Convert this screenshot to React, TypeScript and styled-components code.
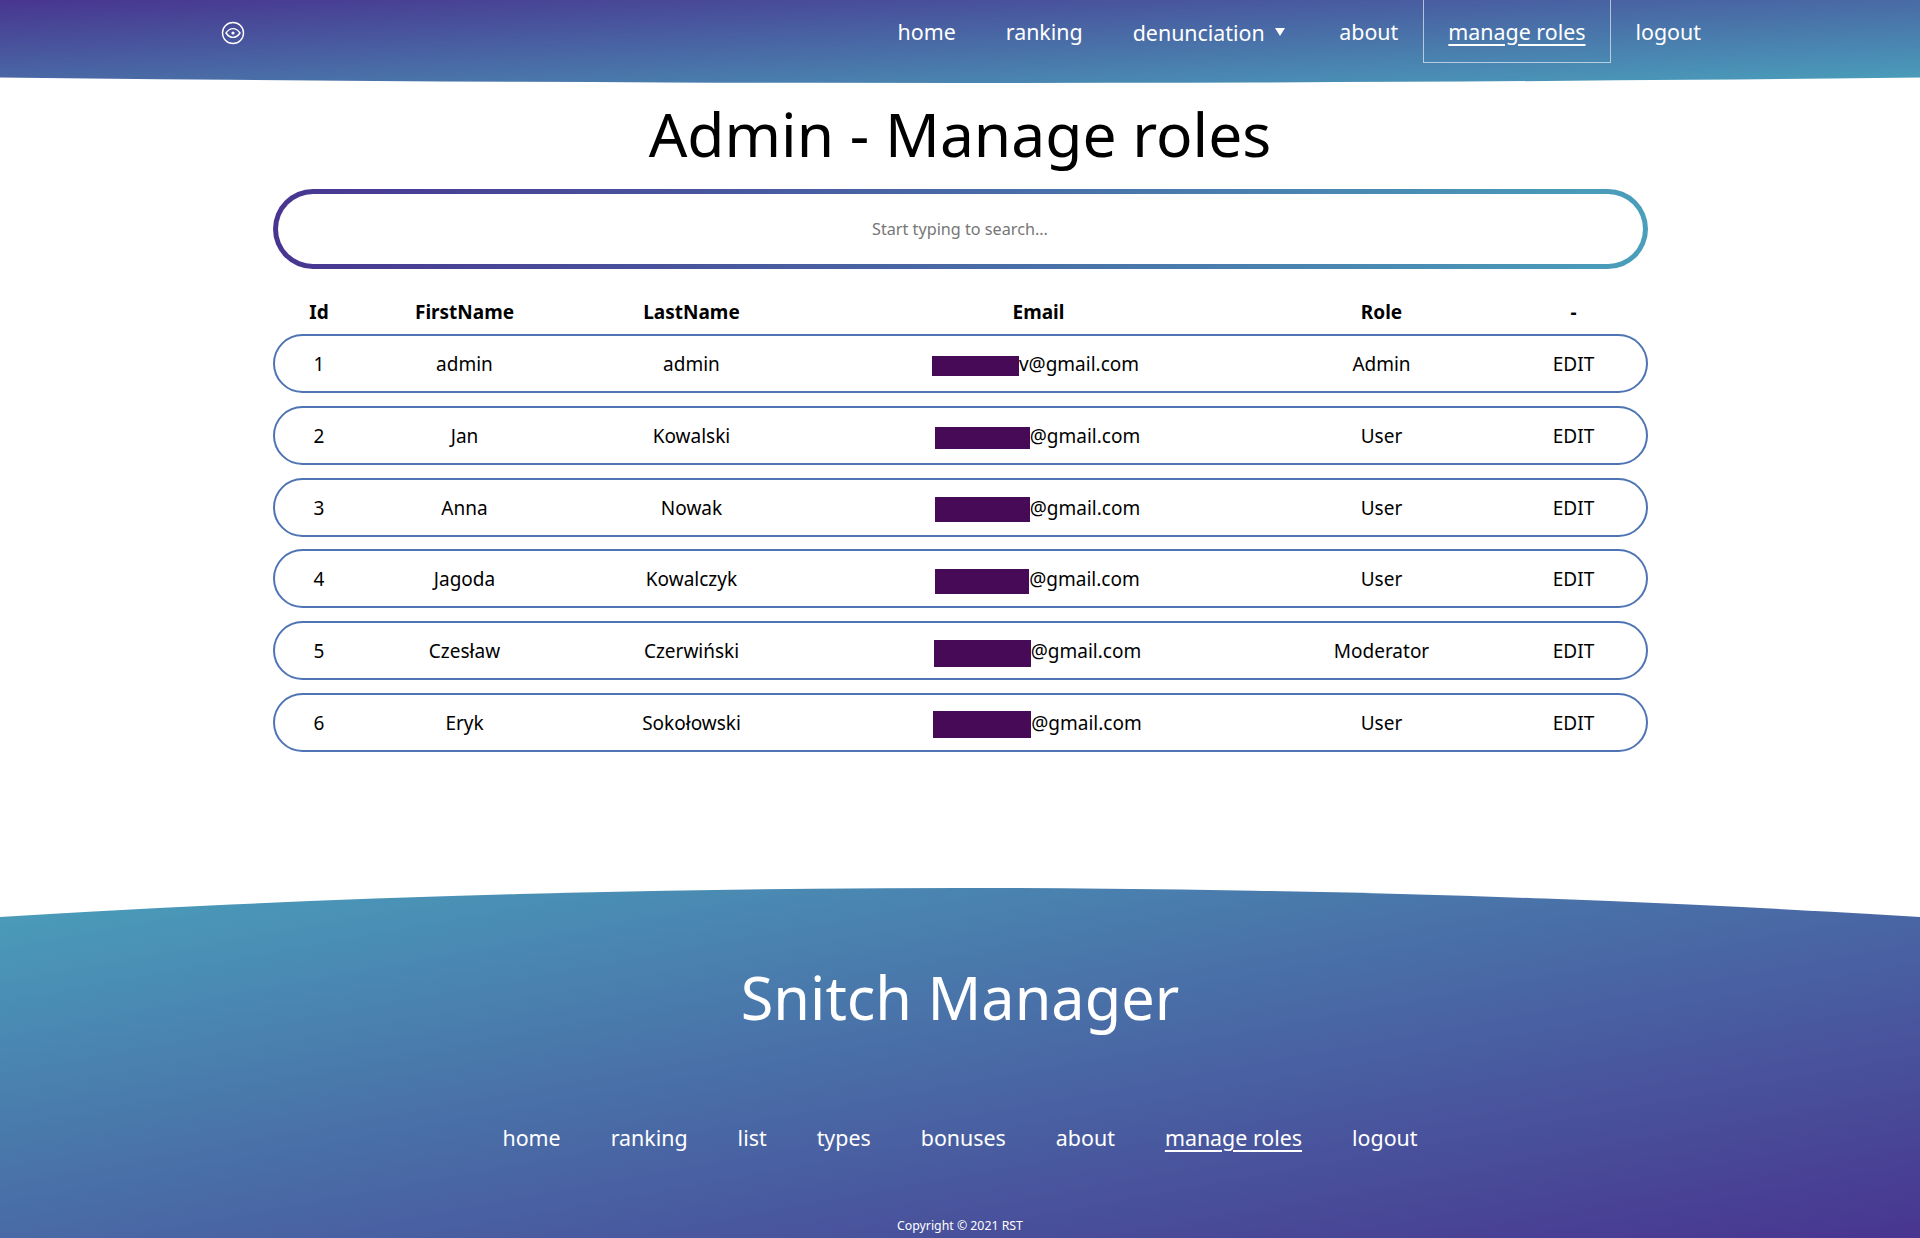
import styled, { createGlobalStyle } from "styled-components";

const GlobalStyle = createGlobalStyle`
  * {
    box-sizing: border-box;
  }

  html,
  body {
    margin: 0;
    padding: 0;
    background: #fff;
    font-family: "Noto Sans", "Lato", sans-serif;
    color: #000;
  }
`;

const COLUMNS = "89px 202px 252px 442px 244px 140px";

const Page = styled.div`
  display: flex;
  flex-direction: column;
  min-height: 1238px;
`;

const Header = styled.header`
  display: flex;
  align-items: flex-start;
  justify-content: space-between;
  height: 83px;
  padding: 0 194px 0 221px;
  background: linear-gradient(to bottom right, #483590, #4a9fbb);
  clip-path: ellipse(3000px 105px at 50% -22px);
`;

const Logo = styled.svg`
  width: 24px;
  height: 24px;
  margin-top: 21px;
  fill: none;
  stroke: #fff;
`;

const HeaderNav = styled.nav`
  display: flex;
  align-items: flex-start;
`;

const HeaderLink = styled.a<{ $active?: boolean; $lowered?: boolean }>`
  display: flex;
  align-items: center;
  height: 63px;
  padding: ${({ $lowered }) => ($lowered ? "2px" : "0")} 24px 0;
  font-size: 21.4px;
  color: #fff;
  text-decoration: ${({ $active }) => ($active ? "underline" : "none")};
  text-underline-offset: 4px;
  border: 1px solid ${({ $active }) => ($active ? "rgba(255, 255, 255, 0.6)" : "transparent")};
  border-top: none;
`;

const Caret = styled.span`
  width: 0;
  height: 0;
  margin: 0 4px 0 10.5px;
  border-left: 5px solid transparent;
  border-right: 5px solid transparent;
  border-top: 8px solid #fff;
`;

const Main = styled.main`
  flex: 1;
  width: 1375px;
  margin: 0 auto;
`;

const Title = styled.h1`
  margin: 0;
  padding-top: 15px;
  height: 106px;
  font-size: 60.5px;
  font-weight: 400;
  line-height: 72px;
  text-align: center;
`;

const SearchBox = styled.input`
  display: block;
  width: 100%;
  height: 80px;
  border: 5px solid transparent;
  border-radius: 40px;
  outline: none;
  background:
    linear-gradient(#fff, #fff) padding-box,
    linear-gradient(to right, #483590, #4a9fbb) border-box;
  font-family: inherit;
  font-size: 16.2px;
  text-align: center;

  &::placeholder {
    color: #767676;
  }
`;

const TableHead = styled.div`
  display: grid;
  grid-template-columns: ${COLUMNS};
  align-items: center;
  height: 65px;
  padding: 20px 2px 0;
  font-size: 19px;
  font-weight: 700;
  text-align: center;
`;

const Rows = styled.div`
  display: flex;
  flex-direction: column;
  gap: 12.8px;
`;

const Row = styled.div`
  display: grid;
  grid-template-columns: ${COLUMNS};
  align-items: center;
  height: 59px;
  padding-top: 1px;
  border: 2px solid #4f74b4;
  border-radius: 30px;
  font-size: 19px;
  text-align: center;
`;

const Cell = styled.span`
  display: block;
`;

const EmailCell = styled.span<{ $shift: number }>`
  display: block;
  padding-right: ${({ $shift }) => $shift * 2}px;
`;

const Redacted = styled.span<{ $width: number; $height: number }>`
  display: inline-block;
  vertical-align: middle;
  margin: -10px 0;
  width: ${({ $width }) => $width}px;
  height: ${({ $height }) => $height}px;
  background: #470a57;
`;

const Footer = styled.footer`
  display: flex;
  flex-direction: column;
  align-items: center;
  height: 350px;
  background: linear-gradient(to bottom right, #4a9fbb, #483590);
  clip-path: ellipse(3000px 551px at 50% 551px);
  color: #fff;
`;

const FooterTitle = styled.div`
  margin-top: 73px;
  font-size: 59.4px;
  line-height: 72px;
`;

const FooterNav = styled.nav`
  display: flex;
  gap: 50px;
  margin-top: 88px;
`;

const FooterLink = styled.a<{ $active?: boolean }>`
  font-size: 21.4px;
  line-height: 34px;
  color: #fff;
  text-decoration: ${({ $active }) => ($active ? "underline" : "none")};
  text-underline-offset: 4px;
`;

const Copyright = styled.div`
  margin-top: 63px;
  font-size: 12.3px;
  line-height: 16px;
`;

const users = [
  { id: 1, first: "admin", last: "admin", tail: "v@gmail.com", role: "Admin", w: 87, h: 20, shift: 3 },
  { id: 2, first: "Jan", last: "Kowalski", tail: "@gmail.com", role: "User", w: 95, h: 22, shift: 1 },
  { id: 3, first: "Anna", last: "Nowak", tail: "@gmail.com", role: "User", w: 95, h: 25, shift: 1 },
  { id: 4, first: "Jagoda", last: "Kowalczyk", tail: "@gmail.com", role: "User", w: 94, h: 25, shift: 1 },
  { id: 5, first: "Czesław", last: "Czerwiński", tail: "@gmail.com", role: "Moderator", w: 97, h: 27, shift: 1 },
  { id: 6, first: "Eryk", last: "Sokołowski", tail: "@gmail.com", role: "User", w: 98, h: 27, shift: 1 },
];

const footerLinks = ["home", "ranking", "list", "types", "bonuses", "about", "manage roles", "logout"];

export default function App() {
  return (
    <Page>
      <GlobalStyle />
      <Header>
        <Logo viewBox="0 0 24 24" strokeWidth="1.4">
          <circle cx="12" cy="12" r="10.5" />
          <path d="M5 12c2-3 4.3-4.4 7-4.4s5 1.4 7 4.4c-2 3-4.3 4.4-7 4.4S7 15 5 12z" />
          <circle cx="12" cy="12" r="1.6" fill="#fff" stroke="none" />
        </Logo>
        <HeaderNav>
          <HeaderLink>home</HeaderLink>
          <HeaderLink>ranking</HeaderLink>
          <HeaderLink $lowered>
            denunciation
            <Caret />
          </HeaderLink>
          <HeaderLink>about</HeaderLink>
          <HeaderLink $active>manage roles</HeaderLink>
          <HeaderLink>logout</HeaderLink>
        </HeaderNav>
      </Header>
      <Main>
        <Title>Admin - Manage roles</Title>
        <SearchBox placeholder="Start typing to search..." />
        <TableHead>
          <Cell>Id</Cell>
          <Cell>FirstName</Cell>
          <Cell>LastName</Cell>
          <Cell>Email</Cell>
          <Cell>Role</Cell>
          <Cell>-</Cell>
        </TableHead>
        <Rows>
          {users.map((user) => (
            <Row key={user.id}>
              <Cell>{user.id}</Cell>
              <Cell>{user.first}</Cell>
              <Cell>{user.last}</Cell>
              <EmailCell $shift={user.shift}>
                <Redacted $width={user.w} $height={user.h} />
                {user.tail}
              </EmailCell>
              <Cell>{user.role}</Cell>
              <Cell>EDIT</Cell>
            </Row>
          ))}
        </Rows>
      </Main>
      <Footer>
        <FooterTitle>Snitch Manager</FooterTitle>
        <FooterNav>
          {footerLinks.map((link) => (
            <FooterLink key={link} $active={link === "manage roles"}>
              {link}
            </FooterLink>
          ))}
        </FooterNav>
        <Copyright>Copyright © 2021 RST</Copyright>
      </Footer>
    </Page>
  );
}
